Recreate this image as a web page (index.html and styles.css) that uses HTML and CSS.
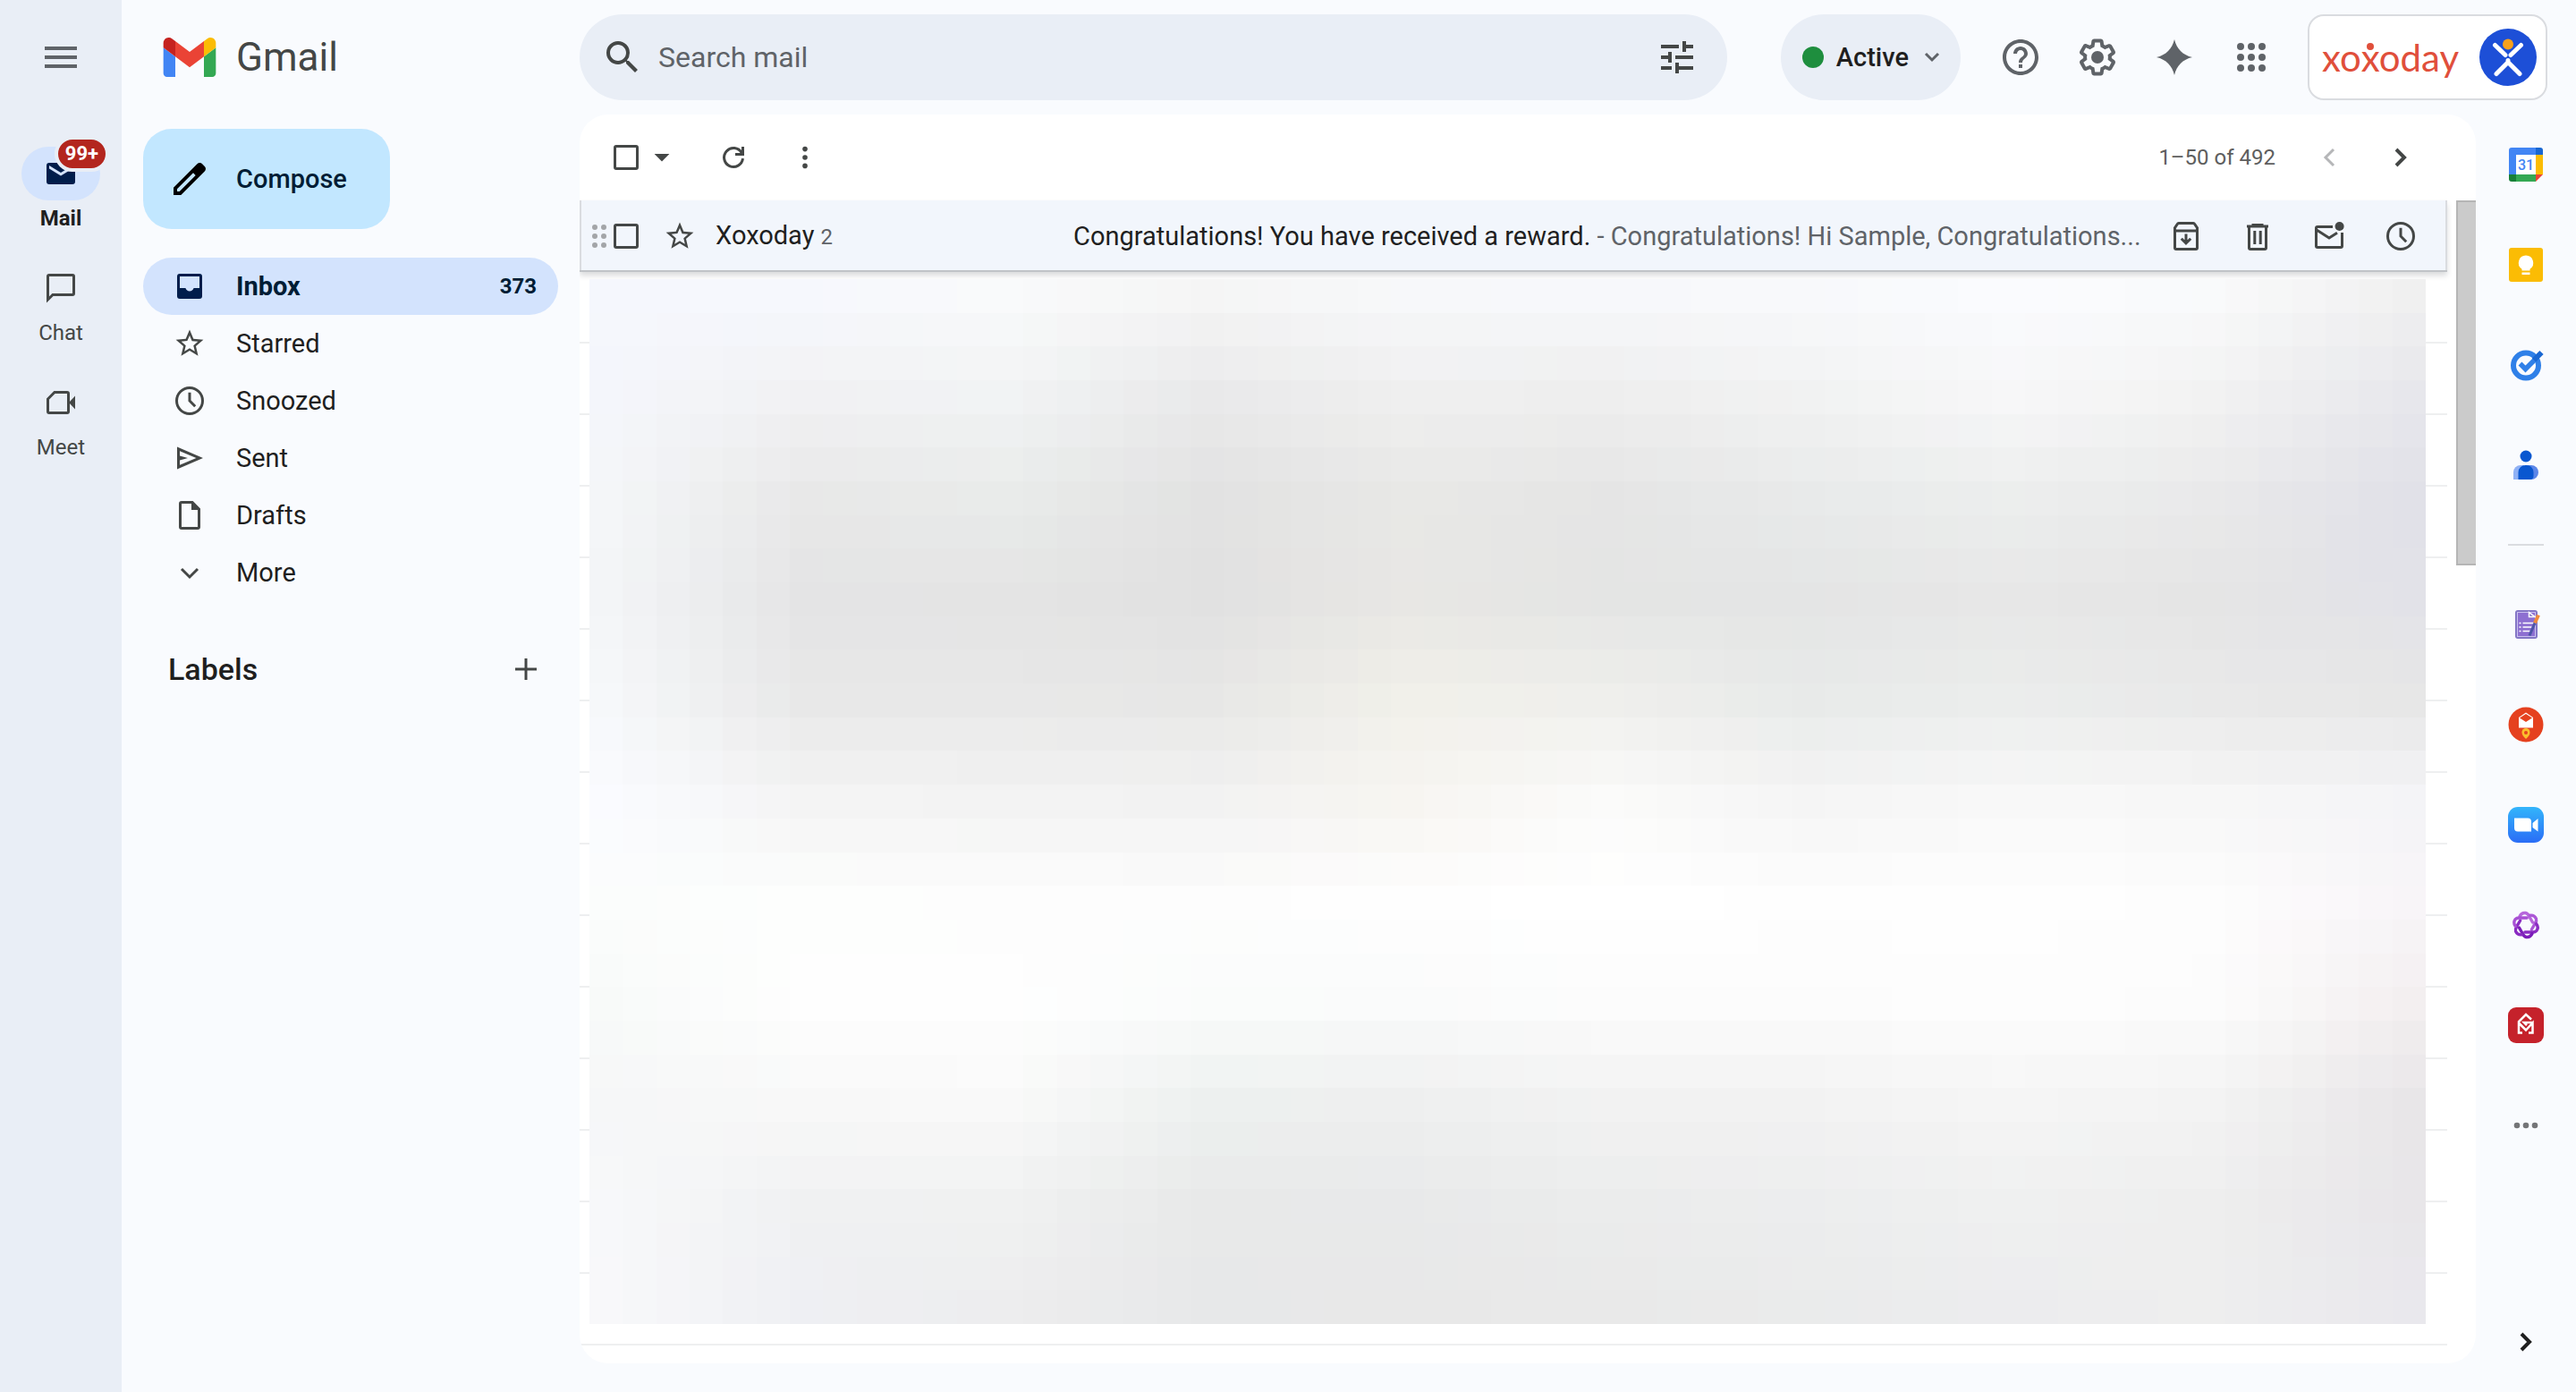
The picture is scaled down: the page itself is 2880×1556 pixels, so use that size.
FILE: index.html
```html
<!DOCTYPE html>
<html lang="en">
<head>
<meta charset="utf-8">
<title>Inbox - Gmail</title>
<link rel="stylesheet" href="styles.css">
</head>
<body>
<svg class="defs" aria-hidden="true">
  <symbol id="star" viewBox="-1 -1 26 26"><path d="M22 9.24l-7.19-.62L12 2 9.19 8.63 2 9.24l5.46 4.73L5.82 21 12 17.27 18.18 21l-1.63-7.03L22 9.24zM12 15.4l-3.76 2.27 1-4.28-3.32-2.88 4.38-.38L12 6.1l1.71 4.04 4.38.38-3.32 2.88 1 4.28L12 15.4z"/></symbol>
  <symbol id="clock" viewBox="0 0 20 20"><path class="line" d="M10 2.75a7.25 7.25 0 1 0 0 14.5 7.25 7.25 0 1 0 0-14.5zM10 5.4V10l3.1 3.1"/></symbol>
  <symbol id="chevron-right" viewBox="0 0 20 20"><path class="line thick" d="M7.5 5.5L12 10l-4.5 4.5"/></symbol>
</svg>
<div class="app">
  <nav class="rail" aria-label="Apps">
    <button class="icon-button menu" aria-label="Main menu"><svg class="i48" viewBox="0 0 24 24"><path d="M3 18h18v-2H3v2zm0-5h18v-2H3v2zm0-7v2h18V6H3z"/></svg></button>
    <a class="rail-item current" href="#mail">
      <span class="rail-pill">
        <svg class="i40" viewBox="0 0 20 20"><path fill-rule="evenodd" d="M3.5 4h13A1.5 1.5 0 0 1 18 5.500v9a1.500 1.500 0 0 1-1.500 1.500h-13A1.500 1.500 0 0 1 2 14.500v-9A1.500 1.500 0 0 1 3.500 4zM3.500 5.500v1.700L10 11.300l6.500-4.100V5.500L10 9.500z"/></svg>
        <span class="badge">99+</span>
      </span>
      <span>Mail</span>
    </a>
    <a class="rail-item" href="#chat">
      <span class="rail-pill"><svg class="i40" viewBox="0 0 20 20"><path class="line" d="M2.750 16.500V3.500a.75.75 0 0 1 .75-.75h13a.75.75 0 0 1 .75.75v9.500a.75.75 0 0 1-.75.75h-11z"/></svg></span>
      <span>Chat</span>
    </a>
    <a class="rail-item" href="#meet">
      <span class="rail-pill"><svg class="i40" viewBox="0 0 20 20"><path class="line" d="M6.500 4.250h7a.75.75 0 0 1 .75.75v10a.75.75 0 0 1-.75.75h-10a.75.75 0 0 1-.75-.75V8z"/><path d="M14.500 10L18 6.200v7.600z"/></svg></span>
      <span>Meet</span>
    </a>
  </nav>

  <header class="topbar">
    <a class="brand" href="#inbox">
      <svg class="brand-mark" viewBox="52 42 88 66"><path fill="#4285f4" d="M58 108h14V74L52 59v43c0 3.320 2.690 6 6 6"/><path fill="#34a853" d="M120 108h14c3.320 0 6-2.690 6-6V59l-20 15"/><path fill="#fbbc04" d="M120 48v26l20-15v-8c0-7.420-8.470-11.650-14.400-7.200"/><path fill="#ea4335" d="M72 74V48l24 18 24-18v26L96 92"/><path fill="#c5221f" d="M52 51v8l20 15V48l-5.600-4.200c-5.940-4.450-14.400-.22-14.400 7.200"/></svg>
      <span>Gmail</span>
    </a>
    <form class="search" role="search">
      <button type="submit" class="icon-button" aria-label="Search"><svg class="i48" viewBox="0 0 24 24"><path d="M15.500 14h-.79l-.28-.27A6.471 6.471 0 0 0 16 9.500 6.500 6.500 0 1 0 9.500 16c1.610 0 3.090-.59 4.230-1.570l.27.28v.79l5 4.990L20.490 19l-4.990-5zm-6 0C7.010 14 5 11.990 5 9.500S7.010 5 9.500 5 14 7.010 14 9.500 11.990 14 9.500 14z"/></svg></button>
      <input type="text" placeholder="Search mail" aria-label="Search mail">
      <button type="button" class="icon-button" aria-label="Search options"><svg class="i48" viewBox="0 0 24 24"><path d="M3 17v2h6v-2H3zM3 5v2h10V5H3zm10 16v-2h8v-2h-8v-2h-2v6h2zM7 9v2H3v2h4v2h2V9H7zm14 4v-2H11v2h10zm-6-4h2V7h4V5h-4V3h-2v6z"/></svg></button>
    </form>
    <button class="status"><span class="status-dot"></span>Active<svg class="i24" viewBox="0 0 12 12"><path class="line" d="M2.500 4L6 7.500 9.500 4"/></svg></button>
    <div class="tools">
      <button class="icon-button" aria-label="Support"><svg class="i48" viewBox="0 0 24 24"><path d="M11 18h2v-2h-2v2zm1-16C6.480 2 2 6.480 2 12s4.480 10 10 10 10-4.480 10-10S17.520 2 12 2zm0 18c-4.410 0-8-3.590-8-8s3.590-8 8-8 8 3.590 8 8-3.590 8-8 8zm0-14c-2.210 0-4 1.790-4 4h2c0-1.100.9-2 2-2s2 .9 2 2c0 2-3 1.750-3 5h2c0-2.250 3-2.500 3-5 0-2.210-1.790-4-4-4z"/></svg></button>
      <button class="icon-button" aria-label="Settings"><svg class="i48" viewBox="0 0 24 24"><path d="M13.850 22.250h-3.700c-.74 0-1.360-.54-1.450-1.270l-.27-1.890c-.27-.14-.53-.29-.79-.46l-1.800.72c-.7.26-1.470-.03-1.810-.65L2.200 15.530c-.35-.66-.2-1.440.36-1.880l1.530-1.190c-.01-.15-.02-.3-.02-.46 0-.15.01-.31.02-.46l-1.520-1.190c-.59-.45-.74-1.260-.37-1.880l1.850-3.190c.34-.62 1.110-.9 1.790-.63l1.810.73c.26-.17.52-.32.78-.46l.27-1.910c.09-.7.71-1.250 1.440-1.250h3.700c.74 0 1.360.54 1.450 1.270l.27 1.890c.27.14.53.29.79.46l1.800-.72c.71-.26 1.480.03 1.820.65l1.840 3.180c.36.66.2 1.440-.36 1.880l-1.520 1.190c.01.15.02.3.02.46s-.01.31-.02.46l1.520 1.190c.56.45.72 1.230.37 1.860l-1.860 3.220c-.34.62-1.110.9-1.800.63l-1.800-.72c-.26.17-.52.32-.78.46l-.27 1.910c-.1.68-.72 1.220-1.460 1.220zm-3.230-2h2.760l.37-2.550.53-.22c.44-.18.88-.44 1.340-.78l.45-.34 2.380.96 1.380-2.400-2.030-1.580.07-.56c.03-.26.06-.51.06-.78s-.03-.53-.06-.78l-.07-.56 2.030-1.580-1.390-2.400-2.390.96-.45-.35c-.42-.32-.87-.58-1.330-.77l-.52-.22-.37-2.550h-2.760l-.37 2.550-.53.21c-.44.19-.88.44-1.340.79l-.45.33-2.380-.95-1.390 2.390 2.030 1.580-.07.56a7 7 0 0 0-.06.79c0 .26.02.53.06.78l.07.56-2.030 1.580 1.380 2.400 2.390-.96.45.35c.43.33.86.58 1.330.77l.53.22.38 2.550z"/><circle cx="12" cy="12" r="3.500"/></svg></button>
      <button class="icon-button" aria-label="Ask Gemini"><svg class="i48" viewBox="0 0 24 24"><path d="M12 2c1.200 5.300 4.700 8.800 10 10-5.300 1.200-8.800 4.700-10 10-1.200-5.300-4.700-8.800-10-10 5.300-1.200 8.800-4.700 10-10z"/></svg></button>
      <button class="icon-button" aria-label="Google apps"><svg class="i48" viewBox="0 0 24 24"><circle cx="6" cy="6" r="2"/><circle cx="12" cy="6" r="2"/><circle cx="18" cy="6" r="2"/><circle cx="6" cy="12" r="2"/><circle cx="12" cy="12" r="2"/><circle cx="18" cy="12" r="2"/><circle cx="6" cy="18" r="2"/><circle cx="12" cy="18" r="2"/><circle cx="18" cy="18" r="2"/></svg></button>
    </div>
    <button class="account" aria-label="Xoxoday account">
      <span class="wordmark">xo<span class="person">x</span>oday</span>
      <svg class="avatar" viewBox="0 0 64 64"><circle cx="32" cy="32" r="32" fill="#1d4fd7"/><g fill="none" stroke="#fff" stroke-width="5" stroke-linecap="round"><path d="M17.500 18.500L29 29.500M46.500 18.500L35 29.500M19 50.500L32 37.500l13 13M32 35.500v2"/></g><circle cx="32" cy="17.500" r="6" fill="#f9a11b"/></svg>
    </button>
  </header>

  <aside class="sidebar">
    <button class="compose"><svg class="i48" viewBox="0 0 24 24"><path fill-rule="evenodd" d="M20.410 4.940l-1.350-1.350c-.78-.78-2.050-.78-2.830 0L3 16.820V21h4.180L20.410 7.770c.79-.78.79-2.050 0-2.830zM6.350 19L5 18.950v-1.300l9-9L15.350 10z"/></svg>Compose</button>
    <nav aria-label="Mailboxes">
      <a class="folder current" href="#inbox"><svg class="i40" viewBox="0 0 20 20"><path fill-rule="evenodd" d="M4.500 3h11A1.500 1.500 0 0 1 17 4.500v11a1.500 1.500 0 0 1-1.500 1.500h-11A1.500 1.500 0 0 1 3 15.500v-11A1.500 1.500 0 0 1 4.500 3zm0 1.500V11h3.200c.4 1 1.200 1.800 2.300 1.800s1.900-.8 2.300-1.800h3.200V4.500z"/></svg><span>Inbox</span><span class="count">373</span></a>
      <a class="folder" href="#starred"><svg class="i40"><use href="#star"/></svg><span>Starred</span></a>
      <a class="folder" href="#snoozed"><svg class="i40"><use href="#clock"/></svg><span>Snoozed</span></a>
      <a class="folder" href="#sent"><svg class="i40" viewBox="0 0 20 20"><path fill-rule="evenodd" d="M3 16.200V3.800L17.500 10zm1.500-2.300l9.200-3.900-9.200-3.900v2.700L9 10l-4.500 1.200z"/></svg><span>Sent</span></a>
      <a class="folder" href="#drafts"><svg class="i40" viewBox="0 0 20 20"><path class="line" d="M5.500 2.750h6l3.750 3.750v10a.75.75 0 0 1-.75.75h-9a.75.75 0 0 1-.75-.75v-13a.75.75 0 0 1 .75-.75z"/><path d="M11 2.500V7h4.500z"/></svg><span>Drafts</span></a>
      <a class="folder" href="#more"><svg class="i40" viewBox="0 0 20 20"><path class="line" d="M5.500 8l4.500 4.500L14.500 8"/></svg><span>More</span></a>
    </nav>
    <div class="labels"><h2>Labels</h2><button class="icon-button" aria-label="Create new label"><svg class="i40" viewBox="0 0 20 20"><path class="line" d="M10 4v12M4 10h12"/></svg></button></div>
  </aside>

  <main class="mail">
    <div class="toolbar">
      <input type="checkbox" aria-label="Select all">
      <button class="icon-button" aria-label="Select options"><svg class="i40" viewBox="0 0 20 20"><path d="M5.800 8h8.400L10 12.200z"/></svg></button>
      <button class="icon-button refresh" aria-label="Refresh"><svg class="i40" viewBox="0 0 20 20"><path class="line" d="M14.600 7.400A5.250 5.250 0 1 0 15.250 10.600"/><path d="M16 4v5h-5V7.500h3.500V4z"/></svg></button>
      <button class="icon-button" aria-label="More options"><svg class="i40" viewBox="0 0 20 20"><circle cx="10" cy="5.300" r="1.400"/><circle cx="10" cy="10" r="1.400"/><circle cx="10" cy="14.700" r="1.400"/></svg></button>
      <span class="range">1–50 of 492</span>
      <button class="icon-button" aria-label="Newer" disabled><svg class="i40" viewBox="0 0 20 20"><path class="line" d="M12.500 5.500L8 10l4.500 4.500"/></svg></button>
      <button class="icon-button" aria-label="Older"><svg class="i40"><use href="#chevron-right"/></svg></button>
    </div>
    <div class="scroller">
      <div class="list">
        <article class="row hovered">
          <svg class="grip" viewBox="0 0 16 26"><circle cx="3" cy="3" r="3"/><circle cx="13" cy="3" r="3"/><circle cx="3" cy="13" r="3"/><circle cx="13" cy="13" r="3"/><circle cx="3" cy="23" r="3"/><circle cx="13" cy="23" r="3"/></svg>
          <input type="checkbox" aria-label="Select conversation from Xoxoday">
          <button class="icon-button star" aria-label="Star"><svg class="i40"><use href="#star"/></svg></button>
          <span class="sender">Xoxoday <small>2</small></span>
          <a class="subject" href="#message">Congratulations! You have received a reward. <span>- Congratulations! Hi Sample, Congratulations...</span></a>
          <span class="actions">
            <button class="icon-button" aria-label="Archive"><svg class="i40" viewBox="0 0 20 20"><path class="line" d="M3.750 6.500v10c0 .4.300.75.75.75h11c.4 0 .75-.35.75-.75v-10M3.750 7V5.300l1.400-2.050a1 1 0 0 1 .8-.5h8.100a1 1 0 0 1 .8.500l1.400 2.050V7zM10 8.800v5M7.400 11.400L10 14l2.600-2.600"/></svg></button>
            <button class="icon-button" aria-label="Delete"><svg class="i40" viewBox="0 0 20 20"><path class="line" d="M4 4.500h12M7.500 4.500V3.700h5v.8M5.250 5v11.500c0 .4.300.75.75.75h8c.4 0 .75-.35.75-.75V5M8.400 7v7.500M11.600 7v7.500"/></svg></button>
            <button class="icon-button" aria-label="Mark as unread"><svg class="i40" viewBox="0 0 20 20"><path class="line" d="M12 4.750H3.500a.75.75 0 0 0-.75.75v10c0 .4.350.75.75.75h13c.4 0 .75-.35.75-.75V8M3 6.500l7 4.500 4.500-2.900"/><circle cx="15.800" cy="4.500" r="2.500"/></svg></button>
            <button class="icon-button" aria-label="Snooze"><svg class="i40"><use href="#clock"/></svg></button>
          </span>
        </article>
        <div class="row"></div><div class="row"></div><div class="row"></div><div class="row"></div><div class="row"></div>
        <div class="row"></div><div class="row"></div><div class="row"></div><div class="row"></div><div class="row"></div>
        <div class="row"></div><div class="row"></div><div class="row"></div><div class="row"></div><div class="row"></div>
        <canvas class="mosaic" width="55" height="31" aria-hidden="true"></canvas>
      </div>
      <div class="track"><div class="thumb"></div></div>
    </div>
  </main>

  <aside class="addons" aria-label="Side panel">
    <button class="icon-button" aria-label="Calendar"><svg class="i40" viewBox="0 0 40 40"><path fill="#fff" d="M9 9h22v22H9z"/><path fill="#4285f4" d="M4 1h27v8H9v22H1V4a3 3 0 0 1 3-3z"/><path fill="#1967d2" d="M31 1h5a3 3 0 0 1 3 3v5h-8z"/><path fill="#fbbc04" d="M31 9h8v22h-8z"/><path fill="#34a853" d="M9 31h22v8H9z"/><path fill="#188038" d="M1 31h8v8H4a3 3 0 0 1-3-3z"/><path fill="#ea4335" d="M31 31h8l-8 8z"/><text x="20" y="26" text-anchor="middle" class="cal-day">31</text></svg></button>
    <button class="icon-button" aria-label="Keep"><svg class="i40" viewBox="0 0 40 40"><rect x="1" y="1" width="38" height="38" rx="3" fill="#fbbc04"/><path fill="#fff" d="M20 9.500a8.300 8.300 0 0 0-4.500 15.200v1.800h9v-1.800A8.300 8.300 0 0 0 20 9.500zM15.500 28.500h9V31h-9z"/></svg></button>
    <button class="icon-button" aria-label="Tasks"><svg class="i40" viewBox="0 0 40 40"><circle cx="20" cy="20.500" r="14" fill="none" stroke="#2f80e8" stroke-width="6"/><path fill="none" stroke="#2f80e8" stroke-width="5.500" d="M13.500 18.500l6 6L31 13"/><path fill="none" stroke="#1967d2" stroke-width="6" d="M29 14.500l8.500-8.500"/></svg></button>
    <button class="icon-button" aria-label="Contacts"><svg class="i40" viewBox="0 0 40 40"><circle cx="20" cy="10" r="6.500" fill="#0957d0"/><path fill="#8fb1f5" d="M6 36v-8a8 8 0 0 1 8-8h4v16z"/><path fill="#5b86e8" d="M20 20h6a8 8 0 0 1 0 16h-6z"/><path fill="#0957d0" d="M11.500 36v-8a8 8 0 0 1 8-8h1a8 8 0 0 1 8 8v4a4 4 0 0 1-4 4z"/></svg></button>
    <hr>
    <button class="icon-button" aria-label="Notes"><svg class="i40" viewBox="0 0 40 40"><rect x="8" y="4" width="25" height="32" rx="3" fill="#8376c5"/><rect x="10.500" y="6.500" width="20" height="27" fill="#8d6fd1" stroke="#c9c0ee"/><path fill="#8376c5" stroke="#fff" stroke-width="1.500" d="M23.500 6.500v5h6.500z"/><path stroke="#fff" stroke-width="1.500" d="M12.500 18.500h2m2 0h12m-16 4.500h2m2 0h10m-14 4.500h2m2 0h8"/><path stroke="#f08a3c" stroke-width="4" d="M34 9.500l-4 9"/><path stroke="#4d55a8" stroke-width="3" d="M30 18.500l-6 14"/></svg></button>
    <button class="icon-button" aria-label="Mail tracker"><svg class="i40" viewBox="0 0 40 40"><circle cx="20" cy="20" r="19.500" fill="#e5411f"/><path fill="#fff" d="M12 12l8-5.500 8 5.500v11.500H12z"/><path fill="#e5411f" d="M13 12.500L20 8l7 4.500-7 4.500z"/><path fill="#fbc02d" d="M20 36c-3-3-4.500-4.500-4.500-7.500a4.500 4.500 0 0 1 9 0c0 3-1.500 4.500-4.500 7.500z"/><circle cx="20" cy="29" r="2" fill="#e5411f"/></svg></button>
    <button class="icon-button" aria-label="Zoom"><svg class="i40" viewBox="0 0 40 40"><defs><linearGradient id="zoom-blue" x2="0" y2="1"><stop stop-color="#33b5fb"/><stop offset="1" stop-color="#2a6df6"/></linearGradient></defs><rect width="40" height="40" rx="11" fill="url(#zoom-blue)"/><path fill="#fff" d="M7 12.500h15a4 4 0 0 1 4 4v11H11a4 4 0 0 1-4-4zM27.500 18l6-5v14.500l-6-4.500z"/></svg></button>
    <button class="icon-button" aria-label="Assistant"><svg class="i40" viewBox="0 0 40 40"><defs><path id="petal" d="M13 10.500Q15 6 19.500 6.500Q22 7 23.500 10L27.500 17"/></defs><g fill="none" stroke-width="3.400" stroke-linecap="round"><use href="#petal" stroke="#b766dc"/><use href="#petal" transform="rotate(60 20 20)" stroke="#ab57d6"/><use href="#petal" transform="rotate(120 20 20)" stroke="#8b2dc2"/><use href="#petal" transform="rotate(180 20 20)" stroke="#7a1cb8"/><use href="#petal" transform="rotate(240 20 20)" stroke="#8a2bc2"/><use href="#petal" transform="rotate(300 20 20)" stroke="#a850d4"/></g></svg></button>
    <button class="icon-button" aria-label="Mail merge"><svg class="i40" viewBox="0 0 40 40"><rect width="40" height="40" rx="9" fill="#c5222b"/><path fill="none" stroke="#fff" stroke-width="2.500" d="M16 28.500h-4V16l8-8 6 5.500M28.500 17H18l3 3M12 17.500l8 8 7.500-8v11H23"/></svg></button>
    <button class="icon-button dots" aria-label="More add-ons"><svg class="i40" viewBox="0 0 40 40"><circle cx="10" cy="20" r="3.300"/><circle cx="20" cy="20" r="3.300"/><circle cx="30" cy="20" r="3.300"/></svg></button>
    <button class="icon-button hide" aria-label="Hide side panel"><svg class="i40"><use href="#chevron-right"/></svg></button>
  </aside>
</div>
<script src="mosaic.js"></script>
</body>
</html>
```
FILE: mosaic.js
```js
// Fills the privacy mosaic by interpolating between coarse colour samples.
const samples = [
  "f5f7fd f6f8fd f9fafb f5f5f5 f7f8fa f7f8fb f8f9fb fafbfe f9fafb f0f0f0",
  "f4f6fb f1f1f3 f1f3f4 e9e9ea efefef eeeeee f1f2f2 f7f7f8 f2f2f2 e7e7ec",
  "f4f6f8 e8e8e8 e9ebea e2e2e2 e8e8e6 e5e5e5 e8eaea eceeed e9e9ea e1e1e8",
  "f3f5f7 e4e4e5 e4e4e4 e1e1e1 e8e7e4 e4e5e4 e4e5e5 e7e7e7 e5e5e5 e2e2e8",
  "f6f8fa e8e8e8 e8e8e8 e7e7e6 f1f0ea efefec e8eae9 ebedec e9e9e9 e7e7e7",
  "fafbff f4f4f4 f3f3f3 f2f2f2 f7f5f1 fbfbfa f5f5f5 f8f8f8 f7f7f7 f4f4f7",
  "fbfdfc fdfefd fdfdfd fdfdfd fefefe ffffff fefefe fefefe fdfdfd f8f5f8",
  "f8faf9 fefefe fefefe fafcfb fafbfb fcfcfc fcfcfc fdfdfd fcfcfc f3eff0",
  "f6f7f8 f8f8f8 f9f9f9 edf0ef eeefef f2f2f2 f2f2f2 f5f5f5 f3f3f3 e8e6e8",
  "f7f8fa f0f1f2 f0f1f1 e8e9e9 e8e9ea ebecec ecedee eff0f0 eeeeee e8e6e9",
  "f8f8fa eeeff3 ededee e7e8e9 e8e8e8 e9e9e9 eaebeb ececee eeeeee e9e8ed"
].map(row => row.split(" ").map(hex => [0, 2, 4].map(i => parseInt(hex.slice(i, i + 2), 16))));

const canvas = document.querySelector(".mosaic");
const context = canvas.getContext("2d");
const mix = (a, b, t) => a.map((value, i) => value + (b[i] - value) * t);

for (let y = 0; y < canvas.height; y++) {
  for (let x = 0; x < canvas.width; x++) {
    const u = x / (canvas.width - 1) * (samples[0].length - 1);
    const v = y / (canvas.height - 1) * (samples.length - 1);
    const left = Math.min(Math.floor(u), samples[0].length - 2);
    const top = Math.min(Math.floor(v), samples.length - 2);
    const upper = mix(samples[top][left], samples[top][left + 1], u - left);
    const lower = mix(samples[top + 1][left], samples[top + 1][left + 1], u - left);
    context.fillStyle = `rgb(${mix(upper, lower, v - top).map(Math.round).join(",")})`;
    context.fillRect(x, y, 1, 1);
  }
}
```
FILE: styles.css
```css
* { box-sizing: border-box; }

body {
  margin: 0;
  background: #f9fbfe;
  color: #1f1f1f;
  font: 29px/40px Roboto, "Liberation Sans", sans-serif;
}

button { padding: 0; border: 0; background: none; color: inherit; font: inherit; }
a { color: inherit; text-decoration: none; }
h2 { margin: 0; font-size: 34px; font-weight: 500; }
svg { display: block; flex: none; fill: currentColor; }
.defs { position: absolute; width: 0; height: 0; }
.line { fill: none; stroke: currentColor; stroke-width: 1.5; }
.thick { stroke-width: 2; }
.i24 { width: 24px; height: 24px; }
.i40 { width: 40px; height: 40px; }
.i48 { width: 48px; height: 48px; }
.icon-button { display: grid; place-items: center; flex: none; color: #444746; }

.app {
  display: grid;
  grid-template-columns: 136px 512px minmax(0, 1fr) 112px;
  grid-template-rows: 128px 1fr;
  min-height: 100vh;
}

/* App rail */
.rail {
  grid-row: 1 / 3;
  display: flex;
  flex-direction: column;
  align-items: center;
  background: #e9eef6;
}
.menu { height: 128px; margin-bottom: 36px; color: #5f6368; }
.rail-item {
  display: flex;
  flex-direction: column;
  align-items: center;
  height: 128px;
  color: #444746;
  font-size: 24px;
}
.rail-item.current { color: #1f1f1f; font-weight: 700; }
.rail-pill {
  position: relative;
  display: grid;
  place-items: center;
  width: 88px;
  height: 60px;
  border-radius: 30px;
}
.current .rail-pill { background: #d3e3fd; color: #001d4b; }
.badge {
  position: absolute;
  top: -12px;
  right: -10px;
  padding: 0 8px;
  border: 4px solid #e9eef6;
  border-radius: 20px;
  background: #b3261e;
  color: #fff;
  font-size: 22px;
  line-height: 32px;
}

/* Top bar */
.topbar { grid-column: 2 / 5; display: flex; align-items: center; padding-right: 32px; }
.brand {
  display: flex;
  align-items: center;
  gap: 22px;
  flex: none;
  width: 512px;
  padding-left: 46px;
  color: #444746;
  font-size: 44px;
}
.brand-mark { width: 60px; height: 44px; }
.search {
  display: flex;
  align-items: center;
  flex: 1;
  gap: 16px;
  height: 96px;
  margin-right: 60px;
  padding: 0 32px 0 24px;
  border-radius: 48px;
  background: #e9eef6;
}
.search input {
  flex: 1;
  min-width: 0;
  padding: 0;
  border: 0;
  background: none;
  color: #1f1f1f;
  font: inherit;
  font-size: 32px;
}
.search input::placeholder { color: #5f6368; opacity: 1; }
.status {
  display: flex;
  align-items: center;
  gap: 14px;
  height: 96px;
  padding: 0 20px 0 24px;
  border-radius: 48px;
  background: #e9eef6;
  font-weight: 500;
}
.status svg { color: #5f6368; }
.status-dot { width: 24px; height: 24px; border-radius: 50%; background: #1e8e3e; }
.tools { display: flex; padding: 0 20px 0 24px; }
.tools .icon-button { width: 86px; color: #5f6368; }
.account {
  display: flex;
  align-items: center;
  justify-content: space-between;
  width: 268px;
  height: 96px;
  padding: 0 10px 0 14px;
  border: 2px solid #dadce0;
  border-radius: 18px;
  background: #fff;
}
.wordmark { color: #e04f3b; font: 42px/48px Lato, sans-serif; }
.person { position: relative; }
.person::before {
  content: "";
  position: absolute;
  top: 9px;
  left: 6px;
  width: 8px;
  height: 8px;
  border-radius: 50%;
  background: #e04f3b;
}
.avatar { width: 64px; height: 64px; }

/* Sidebar */
.sidebar { padding: 16px 24px; }
.compose {
  display: flex;
  align-items: center;
  gap: 28px;
  height: 112px;
  margin-bottom: 32px;
  padding: 0 48px 0 28px;
  border-radius: 32px;
  background: #c2e7ff;
  color: #001d35;
  font-weight: 500;
}
.compose svg { color: #000; }
.folder {
  display: flex;
  align-items: center;
  gap: 32px;
  height: 64px;
  padding: 0 24px 0 32px;
  border-radius: 32px;
}
.folder svg { color: #444746; }
.folder.current { background: #d3e3fd; color: #001d35; font-weight: 700; }
.folder.current svg { color: #001d4b; }
.count { margin-left: auto; font-size: 24px; }
.labels {
  display: flex;
  align-items: center;
  justify-content: space-between;
  margin-top: 56px;
  padding: 0 16px 0 28px;
}

/* Mail list */
.mail {
  display: flex;
  flex-direction: column;
  margin-bottom: 32px;
  border-radius: 32px;
  background: #fff;
  overflow: hidden;
}
.toolbar { display: flex; align-items: center; height: 96px; padding: 0 64px 0 38px; }
.refresh { margin: 0 40px; }
.range { margin: 0 40px 0 auto; color: #5e5e5e; font-size: 24px; }
.range + .icon-button { margin-right: 40px; }
.icon-button:disabled { color: #b5b6b8; }
.toolbar .icon-button:nth-of-type(1) { margin-left: 6px; }
input[type="checkbox"] {
  appearance: none;
  flex: none;
  width: 28px;
  height: 28px;
  margin: 0;
  border: 3px solid #444746;
  border-radius: 3px;
}
.scroller { display: flex; gap: 10px; flex: 1; }
.list { position: relative; flex: 1; min-width: 0; }
.row { display: flex; align-items: center; height: 80px; border-bottom: 2px solid #eeeff0; }
.row.hovered {
  position: relative;
  padding: 2px 32px 0 12px;
  border-bottom-color: #c0c3c7;
  background: #f2f6fc;
  box-shadow: inset 2px 0 #dadce0, inset -2px 0 #dadce0, 0 4px 6px #3c404330;
}
.grip { width: 16px; height: 26px; margin: 0 8px 0 2px; color: #a3a5a8; }
.star { margin: 0 20px 0 26px; }
.sender { flex: none; width: 400px; }
.sender small { color: #5f6368; font-size: 24px; }
.subject { flex: 1; min-width: 0; overflow: hidden; white-space: nowrap; }
.subject span { color: #5f6368; }
.actions { display: flex; gap: 40px; }
.mosaic {
  position: absolute;
  top: 88px;
  left: 11px;
  width: calc(100% - 35px);
  height: 1168px;
  image-rendering: pixelated;
}
.track { width: 22px; }
.thumb { height: 408px; border: 2px solid #b5b5b5; border-right: 0; background: #cbcbcb; }

/* Side panel */
.addons { display: flex; flex-direction: column; align-items: center; }
.addons .icon-button { width: 112px; height: 112px; }
.addons hr { width: 40px; height: 2px; margin: 32px 0; border: 0; background: #dadce0; }
.addons .dots { color: #747577; }
.addons .hide { margin-top: auto; color: #1f1f1f; }
.cal-day { fill: #4285f4; font-size: 16px; font-weight: 500; }
```
